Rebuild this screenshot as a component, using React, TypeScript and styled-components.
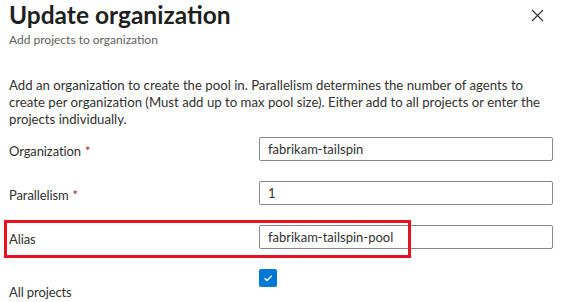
import styled, { createGlobalStyle } from 'styled-components';

const GlobalStyle = createGlobalStyle`
  html, body {
    margin: 0;
    padding: 0;
    background: #ffffff;
  }
  body {
    font-family: "Segoe UI", Lato, "Open Sans", sans-serif;
    color: #323130;
  }
`;

const Panel = styled.div`
  width: 562px;
  height: 302px;
  padding: 0 9px 0 9px;
  box-sizing: border-box;
  overflow: hidden;
`;

const Header = styled.div`
  display: flex;
  justify-content: space-between;
  align-items: flex-start;
`;

const Title = styled.h1`
  margin: 0;
  font-size: 24.5px;
  font-weight: 700;
  line-height: 30px;
  color: #201f1e;
`;

const Subtitle = styled.div`
  font-size: 12px;
  line-height: 16px;
  color: #605e5c;
  margin-top: 2px;
`;

const CloseButton = styled.button`
  border: none;
  background: transparent;
  padding: 0;
  margin: 9px 9px 0 0;
  width: 13px;
  height: 13px;
  display: flex;
  cursor: pointer;
`;

const Description = styled.p`
  margin: 29px 0 0 0;
  font-size: 13.2px;
  line-height: 17px;
  color: #323130;
  white-space: nowrap;
`;

const Form = styled.div`
  margin-top: 9px;
  display: flex;
  flex-direction: column;
  gap: 20px;
`;

const Row = styled.div`
  position: relative;
  display: grid;
  grid-template-columns: 250px 294px;
  align-items: center;
  min-height: 24px;
`;

const Label = styled.label`
  font-size: 13px;
  letter-spacing: -0.1px;
  color: #323130;
  padding-top: 4px;
`;

const Required = styled.span`
  color: #a4262c;
  margin-left: 4px;
`;

const Input = styled.input`
  box-sizing: border-box;
  width: 294px;
  height: 24px;
  border: 1px solid #8a8886;
  border-radius: 2px;
  padding: 0 8px;
  font-family: inherit;
  font-size: 13px;
  color: #323130;
  outline: none;
`;

const Highlight = styled.div`
  position: absolute;
  left: -5px;
  top: -5px;
  width: 407px;
  height: 38px;
  border: 3px solid #e81123;
  box-sizing: border-box;
  pointer-events: none;
`;

const CheckRow = styled(Row)`
  align-items: start;
`;

const CheckLabel = styled(Label)`
  padding-top: 15px;
`;

const Checkbox = styled.span`
  width: 18px;
  height: 18px;
  border-radius: 2px;
  background: #0078d4;
  display: flex;
  align-items: center;
  justify-content: center;
`;

export default function App() {
  return (
    <>
      <GlobalStyle />
      <Panel>
        <Header>
          <div>
            <Title>Update organization</Title>
            <Subtitle>Add projects to organization</Subtitle>
          </div>
          <CloseButton aria-label="Close">
            <svg width="13" height="13" viewBox="0 0 13 13">
              <path d="M1 1L12 12M12 1L1 12" stroke="#323130" strokeWidth="1.1" />
            </svg>
          </CloseButton>
        </Header>
        <Description>
          Add an organization to create the pool in. Parallelism determines the number of agents to
          <br />
          create per organization (Must add up to max pool size). Either add to all projects or enter the
          <br />
          projects individually.
        </Description>
        <Form>
          <Row>
            <Label>
              Organization<Required>*</Required>
            </Label>
            <Input defaultValue="fabrikam-tailspin" />
          </Row>
          <Row>
            <Label>
              Parallelism<Required>*</Required>
            </Label>
            <Input defaultValue="1" />
          </Row>
          <Row>
            <Label>Alias</Label>
            <Input defaultValue="fabrikam-tailspin-pool" />
            <Highlight />
          </Row>
          <CheckRow>
            <CheckLabel>All projects</CheckLabel>
            <Checkbox>
              <svg width="12" height="12" viewBox="0 0 12 12">
                <path d="M2.5 6.2L5 8.5L9.8 3.6" stroke="#ffffff" strokeWidth="1.3" fill="none" />
              </svg>
            </Checkbox>
          </CheckRow>
        </Form>
      </Panel>
    </>
  );
}
